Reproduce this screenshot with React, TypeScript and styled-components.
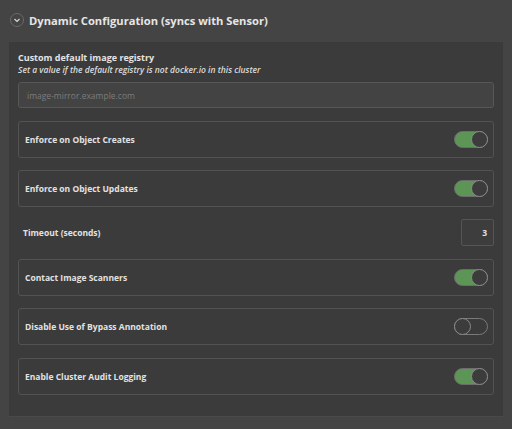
import React from "react";
import styled, { createGlobalStyle } from "styled-components";

const Global = createGlobalStyle`
  html, body { margin: 0; padding: 0; background: #444444; }
  body { font-family: "Open Sans", "Noto Sans", sans-serif; color: #e2e2e2; }
  * { box-sizing: border-box; }
`;

const Page = styled.div`
  width: 512px;
  height: 429px;
  background: #444444;
  padding-top: 11px;
`;

const Header = styled.div`
  display: flex;
  align-items: center;
  gap: 5px;
  height: 18px;
  padding-left: 10px;
  margin-bottom: 13px;
`;

const ChevronCircle = styled.span`
  width: 14px;
  height: 14px;
  border-radius: 50%;
  border: 1px solid #6a6a6a;
  display: flex;
  align-items: center;
  justify-content: center;
`;

const Title = styled.h2`
  margin: 0;
  font-size: 11.2px;
  font-weight: 700;
  color: #e6e6e6;
`;

const Panel = styled.section`
  margin: 0 9px;
  background: #3b3b3b;
  border-bottom: 1px solid #4a4a4a;
  padding: 9px 9px 21px;
  display: flex;
  flex-direction: column;
  gap: 12.5px;
`;

const FieldHead = styled.div`
  display: flex;
  flex-direction: column;
`;

const Label = styled.div`
  font-size: 9px;
  font-weight: 700;
  line-height: 12px;
  color: #e4e4e4;
  padding-top: 1px;
`;

const Hint = styled.div`
  font-size: 8.5px;
  font-style: italic;
  font-weight: 600;
  line-height: 12px;
  color: #dcdcdc;
`;

const TextInput = styled.input`
  height: 26px;
  margin-top: 6px;
  width: 100%;
  background: #434343;
  border: 1px solid #575757;
  border-radius: 3px;
  padding: 0 8px;
  font-family: "Open Sans", sans-serif;
  font-size: 8.5px;
  color: #ddd;
  outline: none;
  &::placeholder { color: #7c7c7c; }
`;

const Row = styled.div`
  height: 37px;
  border: 1px solid #535353;
  border-radius: 3px;
  display: flex;
  align-items: center;
  justify-content: space-between;
  padding: 0 5px 0 6px;
`;

const PlainRow = styled.div`
  height: 26.5px;
  display: flex;
  align-items: center;
  justify-content: space-between;
  padding-left: 5px;
`;

const RowLabel = styled.span`
  font-size: 8.5px;
  font-weight: 700;
  color: #e2e2e2;
`;

const NumberBox = styled.div`
  width: 33px;
  height: 27px;
  border: 1px solid #555555;
  border-radius: 2px;
  background: #3d3d3d;
  display: flex;
  align-items: center;
  justify-content: flex-end;
  padding-right: 6px;
  font-size: 8.5px;
  font-weight: 700;
  color: #e2e2e2;
`;

const Track = styled.span<{ $on: boolean }>`
  width: 34px;
  height: 17px;
  border-radius: 9px;
  border: 1px solid ${(p) => (p.$on ? "#6d6d6d" : "#7a7a7a")};
  background: ${(p) => (p.$on ? "#5d9557" : "#3b3b3b")};
  display: flex;
  justify-content: ${(p) => (p.$on ? "flex-end" : "flex-start")};
  align-items: center;
`;

const Knob = styled.span`
  width: 17px;
  height: 17px;
  margin: -1px;
  border-radius: 50%;
  border: 1px solid #8a8a8a;
  background: #3c3c3c;
`;

const Toggle = ({ on }: { on: boolean }) => (
  <Track $on={on}>
    <Knob />
  </Track>
);

const toggles: [string, boolean][] = [
  ["Enforce on Object Creates", true],
  ["Enforce on Object Updates", true],
];
const toggles2: [string, boolean][] = [
  ["Contact Image Scanners", true],
  ["Disable Use of Bypass Annotation", false],
  ["Enable Cluster Audit Logging", true],
];

export default function App() {
  return (
    <Page>
      <Global />
      <Header>
        <ChevronCircle>
          <svg width="8" height="8" viewBox="0 0 8 8">
            <path d="M1.5 3 L4 5.5 L6.5 3" fill="none" stroke="#d8d8d8" strokeWidth="1.2" />
          </svg>
        </ChevronCircle>
        <Title>Dynamic Configuration (syncs with Sensor)</Title>
      </Header>
      <Panel>
        <FieldHead>
          <Label>Custom default image registry</Label>
          <Hint>Set a value if the default registry is not docker.io in this cluster</Hint>
          <TextInput placeholder="image-mirror.example.com" />
        </FieldHead>
        {toggles.map(([l, on]) => (
          <Row key={l}>
            <RowLabel>{l}</RowLabel>
            <Toggle on={on} />
          </Row>
        ))}
        <PlainRow>
          <RowLabel>Timeout (seconds)</RowLabel>
          <NumberBox>3</NumberBox>
        </PlainRow>
        {toggles2.map(([l, on]) => (
          <Row key={l}>
            <RowLabel>{l}</RowLabel>
            <Toggle on={on} />
          </Row>
        ))}
      </Panel>
    </Page>
  );
}
